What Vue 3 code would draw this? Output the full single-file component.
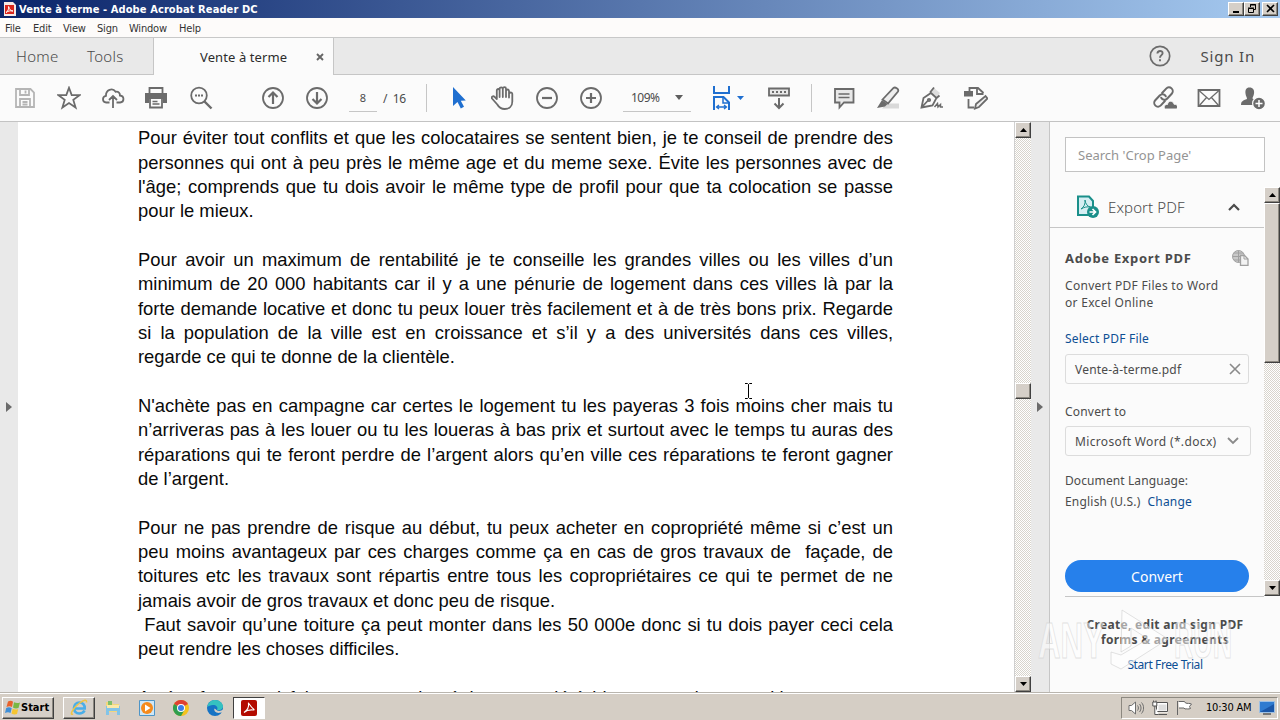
<script setup>
import { ref } from 'vue'

const menus = ['File', 'Edit', 'View', 'Sign', 'Window', 'Help']
const page = ref(8)
const zoom = ref('109%')
const search = ref('')

// last: true means the line ends a paragraph and is not justified
const lines = [
  { text: 'Pour éviter tout conflits et que les colocataires se sentent bien, je te conseil de prendre des' },
  { text: 'personnes qui ont à peu près le même age et du meme sexe. Évite les personnes avec de' },
  { text: "l'âge; comprends que tu dois avoir le même type de profil pour que ta colocation se passe" },
  { text: 'pour le mieux.', last: true },
  { text: '', last: true },
  { text: 'Pour avoir un maximum de rentabilité je te conseille les grandes villes ou les villes d’un' },
  { text: 'minimum de 20 000 habitants car il y a une pénurie de logement dans ces villes là par la' },
  { text: 'forte demande locative et donc tu peux louer très facilement et à de très bons prix. Regarde' },
  { text: 'si la population de la ville est en croissance et s’il y a des universités dans ces villes,' },
  { text: 'regarde ce qui te donne de la clientèle.', last: true },
  { text: '', last: true },
  { text: "N'achète pas en campagne car certes le logement tu les payeras 3 fois moins cher mais tu" },
  { text: 'n’arriveras pas à les louer ou tu les loueras à bas prix et surtout avec le temps tu auras des' },
  { text: 'réparations qui te feront perdre de l’argent alors qu’en ville ces réparations te feront gagner' },
  { text: 'de l’argent.', last: true },
  { text: '', last: true },
  { text: 'Pour ne pas prendre de risque au début, tu peux acheter en copropriété même si c’est un' },
  { text: 'peu moins avantageux par ces charges comme ça en cas de gros travaux de \u00a0façade, de' },
  { text: 'toitures etc les travaux sont répartis entre tous les copropriétaires ce qui te permet de ne' },
  { text: 'jamais avoir de gros travaux et donc peu de risque.', last: true },
  { text: '\u00a0Faut savoir qu’une toiture ça peut monter dans les 50 000e donc si tu dois payer ceci cela' },
  { text: 'peut rendre les choses difficiles.', last: true },
  { text: '', last: true },
  { text: 'Après, faut aussi faire une attention à la copropriété bien avant de te positionner sur un' },
]
</script>

<template>
  <div class="screen">
    <header class="titlebar">
      <svg class="app-icon" width="12" height="14" viewBox="0 0 12 14">
        <path d="M0 0h9l3 3v11H0z" fill="#f6e9e6" />
        <path d="M1 3h9v9H1z" fill="#d9261c" />
        <path d="M2 10.500c2-1 3-4 2.600-6 .7 3 2.400 4.500 4.400 4.500-3-.6-5 .1-7 1.500" fill="none" stroke="#fff" stroke-width="1" />
      </svg>
      <span class="title">Vente à terme - Adobe Acrobat Reader DC</span>
      <div class="window-buttons">
        <button class="raised" aria-label="Minimize">
          <svg width="11" height="10" viewBox="0 0 11 10"><path d="M2 7h6v2H2z" /></svg>
        </button>
        <button class="raised" aria-label="Restore">
          <svg width="11" height="10" viewBox="0 0 11 10" fill="none" stroke="#000">
            <path d="M3.500 3V.5h5v5H7M3 1h6M1.500 4.500h5v4h-5zM1 4h6" />
          </svg>
        </button>
        <button class="raised close" aria-label="Close">
          <svg width="11" height="10" viewBox="0 0 11 10"><path d="M2 1l7 7M9 1L2 8" stroke="#000" stroke-width="1.600" /></svg>
        </button>
      </div>
    </header>

    <nav class="menubar">
      <span v-for="m in menus" :key="m" :class="'menu-' + m.toLowerCase()">{{ m }}</span>
    </nav>

    <div class="tabbar">
      <div class="tabs-left">
        <span class="home">Home</span>
        <span class="tools">Tools</span>
      </div>
      <div class="tab-active">
        <span>Vente à terme</span>
        <svg width="8" height="8" viewBox="0 0 8 8"><path d="M1 1l6 6M7 1L1 7" stroke="#666" stroke-width="1.900" /></svg>
      </div>
      <div class="tabs-right">
        <svg width="22" height="22" viewBox="0 0 22 22" fill="none" stroke="#6b6b6b" stroke-width="1.700">
          <circle cx="11" cy="11" r="9.700" />
          <path d="M8.400 8.500c.2-3.300 5.300-3.200 5.200-.3 0 1.900-2.600 2-2.600 4.500M11 14.200v2" stroke-width="1.900" />
        </svg>
        <span>Sign In</span>
      </div>
    </div>

    <div class="toolbar">
      <button aria-label="Save">
        <svg class="icon pale" viewBox="0 0 24 24">
          <path d="M3 3h14.500L21 6.500V21H3zM7 3v6h9V3M12.500 4.500v3M7 21v-8h10v8M9.500 16h5M9.500 18.500h5" />
        </svg>
      </button>
      <button aria-label="Star">
        <svg class="icon" viewBox="0 0 24 24"><path d="M12 1.800l2.700 7.200 7.800.2-6.200 4.700 2.300 7.600-6.600-4.400-6.600 4.400 2.300-7.600L1.500 9.200l7.800-.2z" /></svg>
      </button>
      <button aria-label="Upload">
        <svg class="icon" viewBox="0 0 24 24">
          <path d="M8.500 16.500H5.200C1 16.200.9 10.500 5 9.800 4.600 4 11.500 1 14.600 5.800c3-.6 4.500 1.500 4.300 3.700 4.700.4 4.700 6.800.2 7h-3.600M12 22V10.500M8 14l4-4 4 4" />
        </svg>
      </button>
      <button aria-label="Print">
        <svg class="icon" viewBox="1 0 24 24">
          <path d="M5.500 7V2h13v5" />
          <path d="M1 7h22v10h-4v-4H5v4H1z" fill="#6b6b6b" stroke="none" />
          <path d="M6 12h12v9.500H6z" fill="#fbfbfb" /><path d="M8.500 15.500h5M8.500 18h7" stroke-width="1.300" />
        </svg>
      </button>
      <button aria-label="Find">
        <svg class="icon" viewBox="0 0 24 24">
          <circle cx="10" cy="9.500" r="7.800" /><path d="M15.500 15.500l7 7" stroke-width="2.400" />
          <path d="M6 8.500h2v2H6zM9 8.500h2v2H9zM12 8.500h2v2h-2z" fill="#6b6b6b" stroke="none" />
        </svg>
      </button>
      <button class="prev" aria-label="Previous page">
        <svg class="icon" viewBox="0 0 24 24"><circle cx="12" cy="12" r="10" /><path d="M12 18V7M7.500 11L12 6.500l4.500 4.500" stroke-width="2.200" /></svg>
      </button>
      <button aria-label="Next page">
        <svg class="icon" viewBox="0 0 24 24"><circle cx="12" cy="12" r="10" /><path d="M12 6v11M7.500 13l4.500 4.500 4.500-4.500" stroke-width="2.200" /></svg>
      </button>
      <div class="field page-field">{{ page }}</div>
      <span class="page-total">/&nbsp; 16</span>
      <i class="sep sep-page"></i>
      <button class="select" aria-label="Select">
        <svg class="icon" viewBox="0 0 24 24"><path d="M6 1v19l4.500-4 3.300 6.500 3.200-1.700-3.200-6 5-.3z" fill="#1f6fd0" stroke="none" /></svg>
      </button>
      <button aria-label="Hand">
        <svg class="icon" viewBox="0 0 24 24" stroke-linecap="round" stroke-linejoin="round">
          <path d="M5.800 13V4.500c0-2 2.800-2 2.800 0V11M8.600 5V2.900c0-2 3.200-2 3.200 0V11M11.800 4V2.700c0-2 3.200-2 3.200 0V11M15 5c0-2 3-2 3 0v6.500M18 8c0-2 3.400-2 3.300 0v7.500c0 5-3.300 7.500-7.600 7.500-3.500 0-5.700-1.500-7.400-4.500L1 12.500c-.9-1.700 1.200-3 2.600-1.700L5.800 13" />
        </svg>
      </button>
      <button aria-label="Zoom out">
        <svg class="icon" viewBox="0 0 24 24"><circle cx="12" cy="12" r="10" /><path d="M7 12h10" stroke-width="2.200" /></svg>
      </button>
      <button aria-label="Zoom in">
        <svg class="icon" viewBox="0 0 24 24"><circle cx="12" cy="12" r="10" /><path d="M7 12h10M12 7v10" stroke-width="2.200" /></svg>
      </button>
      <div class="field zoom-field">
        <span>{{ zoom }}</span>
        <svg width="8" height="5" viewBox="0 0 8 5"><path d="M0 0h8L4 5z" fill="#5e5e5e" /></svg>
      </div>
      <button class="fit" aria-label="Fit width">
        <svg width="32" height="26" viewBox="0 0 32 26" fill="none" stroke="#1f6fd0" stroke-width="2">
          <path d="M2 1v7h15V1M2 25V12h9.500l5.500 5.500V25" />
          <path d="M11 12v6h6" stroke-width="1.500" />
          <path d="M5 22h9M7 20l-2.500 2L7 24M12 20l2.500 2-2.500 2" stroke-width="1.300" />
          <path d="M25 11h7l-3.500 4z" fill="#1f6fd0" stroke="none" />
        </svg>
      </button>
      <button class="keys" aria-label="Keyboard">
        <svg class="icon" viewBox="0 0 24 24">
          <path d="M2 2.500h20v7H2z" fill="#e8e8e8" /><path d="M5 6h2M9 6h2M13 6h2M17 6h2M12 12v10M7.500 17.500L12 22l4.500-4.500" stroke-width="2" />
        </svg>
      </button>
      <i class="sep"></i>
      <button class="comment" aria-label="Comment">
        <svg class="icon" viewBox="0 0 24 24"><path d="M3 3h18.500v13.500H12l-4.500 5v-5H3z" fill="#e8e8e8" /><path d="M6.500 8h11M6.500 11.500h11" stroke-width="1.400" /></svg>
      </button>
      <button aria-label="Highlight">
        <svg class="icon" viewBox="0 0 24 24">
          <path d="M10 17.500h13v5H6z" fill="#d9d9d9" stroke="none" />
          <path d="M6.500 13.500L17.500 2c1.500-1.300 5.800.8 4.500 3.500L12 17.500z" fill="#ededed" />
          <path d="M6 14l5.500 4-2.500 2.500L1 22z" fill="#6b6b6b" stroke="none" />
        </svg>
      </button>
      <button aria-label="Sign">
        <svg class="icon" viewBox="0 0 24 24">
          <path d="M14 2l6 5-3 4-6-5z" fill="#dedede" stroke="none" />
          <path d="M1.500 21.500L3.500 12 11 7l5.500 5L12.500 19.500zM1.500 21.500L8 14.500M10 6.500L14 1.500M16 12.500l3.500-3" />
          <circle cx="9" cy="14" r="1.200" /><path d="M14.500 21l3-3.500.5 3.500 2.500-2.500v2.500H23" stroke-width="1.500" />
        </svg>
      </button>
      <button aria-label="Edit page">
        <svg class="icon" viewBox="0 0 24 24">
          <path d="M5.500 6V2h8.500l5.500 5M13 2v6h6.500M4.500 13v8.500h5.500" />
          <path d="M0 5h9v5.500H0z" fill="#6b6b6b" stroke="none" />
          <path d="M11 22.500l1-4.500L21.500 10l2 2.500-8.500 8.500z" fill="#eee" />
        </svg>
      </button>
      <div class="share">
        <button aria-label="Copy link">
          <svg class="icon" viewBox="0 0 24 24" stroke-linecap="round">
            <g transform="rotate(-47 10.500 11)" stroke-width="2">
              <path d="M8.500 14.800H2.500a3.800 3.800 0 0 1 0-7.600h6.500a3.800 3.800 0 0 1 3.600 5M12.500 7.200H18.500a3.800 3.800 0 0 1 0 7.600h-6.500a3.800 3.800 0 0 1-3.600-5" />
            </g>
            <path d="M11.500 22.800c-1-3 .8-4.600 3-4.300.5-4.500 6-4 6.500-.2 3-.3 4.500 2 3 4.500z" fill="#6b6b6b" stroke="#fbfbfb" stroke-width=".8" />
          </svg>
        </button>
        <button aria-label="Mail">
          <svg class="icon" viewBox="0 0 24 24"><path d="M1.500 4h21v16h-21z" /><path d="M2 4.500l10 9 10-9M2 20l7.500-8.500M22 20l-7.500-8.500" stroke-width="1.300" /></svg>
        </button>
        <button aria-label="Add person">
          <svg class="icon" viewBox="0 0 24 24">
            <path d="M8.500 1.500c3.500 0 5 2.500 4.500 6-.3 2.500-1.500 3.500-1.500 5l3 2v4.500H0c0-4 2-4.300 6-6 0-2-1.300-3-1.500-5.500C4.200 4 5 1.500 8.500 1.500" fill="#6b6b6b" stroke="none" />
            <circle cx="18" cy="17.500" r="6.400" fill="#6b6b6b" stroke="#fbfbfb" stroke-width="1.200" />
            <path d="M14.500 17.500h7M18 14v7" stroke="#fff" stroke-width="1.500" />
          </svg>
        </button>
      </div>
    </div>

    <main class="content">
      <aside class="rail">
        <svg width="6" height="10" viewBox="0 0 6 10"><path d="M0 0l6 5-6 5z" fill="#6b6b6b" /></svg>
      </aside>
      <section class="document">
        <div v-for="(line, i) in lines" :key="i" class="line" :class="{ last: line.last }">{{ line.text }}</div>
        <svg class="ibeam" width="9" height="16" viewBox="0 0 9 16">
          <path d="M1 .5h2.500l1 1 1-1H8M4.500 1.500v13M1 15.500h2.500l1-1 1 1H8" fill="none" stroke="#000" />
        </svg>
      </section>
      <div class="scrollbar doc-scroll">
        <button class="raised" aria-label="Scroll up"><svg width="7" height="4" viewBox="0 0 7 4"><path d="M3.500 0L7 4H0z" /></svg></button>
        <div class="raised thumb"></div>
        <button class="raised down" aria-label="Scroll down"><svg width="7" height="4" viewBox="0 0 7 4"><path d="M0 0h7L3.500 4z" /></svg></button>
      </div>
      <div class="divider">
        <svg width="6" height="10" viewBox="0 0 6 10"><path d="M0 0l6 5-6 5z" fill="#6b6b6b" /></svg>
      </div>

      <aside class="panel">
        <input v-model="search" class="search" placeholder="Search 'Crop Page'" />
        <div class="panel-body">
          <div class="export">
            <div class="export-head">
              <svg width="24" height="24" viewBox="0 0 24 24" fill="none" stroke="#1a8f8a" stroke-width="2">
                <path d="M2 1.500h11l4 4.500v14H2z" fill="#d5eef3" />
                <path d="M5 14c3-2 4.500-5 4-9 .5 4 2.500 6.500 5.500 7-3.500-.5-6 0-9.500 2" stroke-width="1" />
                <circle cx="17" cy="17" r="6" fill="#1a8f8a" stroke="none" />
                <path d="M13.500 17h5M16.500 14l3 3-3 3" stroke="#fff" stroke-width="1.700" />
              </svg>
              <span>Export PDF</span>
              <svg class="chevron" width="12" height="8" viewBox="0 0 12 8"><path d="M1 7l5-5 5 5" fill="none" stroke="#4b4b4b" stroke-width="2.200" /></svg>
            </div>
            <div class="export-body">
              <div class="heading">
                <b>Adobe Export PDF</b>
                <svg width="17" height="16" viewBox="0 0 17 16" fill="none" stroke="#a0a0a0">
                  <circle cx="6.500" cy="6.500" r="6" fill="#c9c9c9" /><path d="M.5 6.500h12M6.500.5v12M2 3h9M2 10h9" />
                  <path d="M8.500 5.500h4l3.500 3.500v6.500H8.500z" fill="#f3f3f3" stroke-width="1.300" /><path d="M12 5.500V9h4" />
                </svg>
              </div>
              <p class="blurb">Convert PDF Files to Word<br />or Excel Online</p>
              <a class="select-file">Select PDF File</a>
              <div class="box file-box">
                <span>Vente-à-terme.pdf</span>
                <svg width="12" height="12" viewBox="0 0 12 12"><path d="M1 1l10 10M11 1L1 11" stroke="#8a8a8a" stroke-width="1.600" /></svg>
              </div>
              <div class="convert-label">Convert to</div>
              <div class="box format-box">
                <span>Microsoft Word (*.docx)</span>
                <svg width="12" height="8" viewBox="0 0 12 8"><path d="M1 1l5 5 5-5" fill="none" stroke="#8a8a8a" stroke-width="1.800" /></svg>
              </div>
              <div class="lang-label">Document Language:</div>
              <div class="lang"><span>English (U.S.)</span><a>Change</a></div>
              <button class="convert">Convert</button>
            </div>
          </div>
          <div class="scrollbar panel-scroll">
            <button class="raised" aria-label="Scroll up"><svg width="7" height="4" viewBox="0 0 7 4"><path d="M3.500 0L7 4H0z" /></svg></button>
            <div class="raised thumb"></div>
            <button class="raised down" aria-label="Scroll down"><svg width="7" height="4" viewBox="0 0 7 4"><path d="M0 0h7L3.500 4z" /></svg></button>
          </div>
        </div>
        <footer class="promo">
          <b>Create, edit and sign PDF</b>
          <b class="promo-second">forms &amp; agreements</b>
          <a>Start Free Trial</a>
        </footer>
      </aside>
    </main>

    <svg class="watermark" width="204" height="70" viewBox="0 0 204 70">
      <g fill="#fff" fill-opacity=".5" stroke="#cfcfcf" stroke-opacity=".6">
        <text x="2" y="53" textLength="66" lengthAdjust="spacingAndGlyphs">ANY</text>
        <text x="138" y="53" textLength="58" lengthAdjust="spacingAndGlyphs">RUN</text>
        <path d="M86 5l46 29-47 30-10-5V47l10 3 27-16-17-11v18l-10 6z" />
      </g>
    </svg>

    <footer class="taskbar">
      <button class="raised start">
        <svg width="16" height="15" viewBox="0 0 16 15">
          <path d="M3 1.500c2-1 4-.8 5 .2L7 7C5.500 6 3.500 6 1.500 7z" fill="#e8622c" />
          <path d="M9 2.200c2 1 4 1 6 .2L13.500 8c-2 .8-4 .6-5.500-.5z" fill="#79b843" />
          <path d="M1.200 8c2-1 4-.8 5.500.2L5.500 13C4 12 2 12 0 13z" fill="#3f8fd8" />
          <path d="M7.700 8.800c2 1 4 1 5.500.2L12 14c-2 .8-4 .4-5.500-.5z" fill="#f5c531" />
        </svg>
        <span>Start</span>
      </button>
      <div class="raised task ie">
        <svg width="18" height="17" viewBox="0 0 18 17" fill="none">
          <path d="M14.500 11.500c-1 2-3 3-5.300 3C6 14.500 4 12 4 9s2.300-5.500 5.400-5.500C12.600 3.500 15 6 14.700 9.500H5" stroke="#4aaee8" stroke-width="2.700" />
          <path d="M3 15c-4 2 0-6 6-10.500 5-4 8-4.500 7.500-1" stroke="#efc443" stroke-width="1.500" />
        </svg>
      </div>
      <div class="task">
        <svg width="16" height="16" viewBox="0 0 16 16">
          <path d="M1 2h6l1 2h6v8H1z" fill="#f2d67c" /><path d="M3 1h4v4H3z" fill="#7fbf6a" />
          <path d="M1 6h14v9h-3v-4H4v4H1z" fill="#82c4e8" /><path d="M2 5h12v3H2z" fill="#fae9a8" />
        </svg>
      </div>
      <div class="task">
        <svg width="16" height="16" viewBox="0 0 16 16">
          <path d="M.5.5h15v15H.5z" fill="#cfe7f7" stroke="#4e95c7" /><circle cx="8" cy="8" r="6" fill="#f58a1c" />
          <path d="M6 4.500L11.500 8 6 11.500z" fill="#fff" />
        </svg>
      </div>
      <div class="task">
        <svg width="16" height="16" viewBox="0 0 16 16">
          <circle cx="8" cy="8" r="8" fill="#f4c21e" />
          <path d="M8 8L1.070 4A8 8 0 0 1 14.930 4z" fill="#df4032" />
          <path d="M8 8L1.070 4A8 8 0 0 0 8 16l3.500-6z" fill="#2f9e4f" />
          <circle cx="8" cy="8" r="4" fill="#fff" /><circle cx="8" cy="8" r="3" fill="#3c7de8" />
        </svg>
      </div>
      <div class="task">
        <svg width="16" height="16" viewBox="0 0 16 16">
          <circle cx="8" cy="8" r="8" fill="#1673c4" />
          <path d="M.2 7C1 2.500 4.500 0 8 0c5 0 8 3.500 8 6.500 0 3-3.500 4.500-6 3.500 1.500-3-1-5-4-5-2.500 0-4.500 1-5.800 2" fill="#35c1c0" />
          <path d="M7.500 8.500c-1 2.500 1.500 5 5.500 4.300L16 12V9.500c-1.500 1.500-5 2-6.500.5-.6-.5-1-1-2-1.500z" fill="#d5cec5" />
        </svg>
      </div>
      <div class="task active">
        <svg width="16" height="16" viewBox="0 0 16 16">
          <rect width="16" height="16" rx="2" fill="#b30b00" />
          <path d="M3 12.500C6 10.500 8 7 7.500 3.500 7 1.500 9 6.500 13 9.500 14 11 8 8 3 12.500" fill="none" stroke="#fff" stroke-width="1.100" />
        </svg>
      </div>
      <div class="tray">
        <svg width="16" height="14" viewBox="0 0 16 14" fill="none" stroke="#6e6e6e">
          <path d="M1 4.500h2.500L7.500 1v12l-4-3.500H1z" fill="#fff" /><path d="M9.500 4.500c1.200 1.500 1.200 3.500 0 5M11.500 3c2 2.500 2 5.500 0 8M13.500 1.500c2.800 3 2.800 8 0 11" />
        </svg>
        <svg class="net" width="16" height="16" viewBox="0 0 16 16" fill="none" stroke="#555">
          <path d="M5.500 3.500h10v8h-10z" fill="#ddd" stroke="#fff" stroke-width="2" /><path d="M4.500 2.500h11v9h-11zM7 14.500h8" />
          <path d="M.8 2h4v4h-4zM1.500.500V2M4 .5V2M2.800 6v8.500h4" fill="#fff" />
        </svg>
        <svg class="flag" width="17" height="15" viewBox="0 0 17 15">
          <path d="M1.500 1v14M2.500 1.500h6l1 1.500c2 .8 4 0 6 1l-2 2.500 1 2c-2 1-4 0-5.500.5l-1-1h-5" fill="#fff" stroke="#666" />
        </svg>
        <span class="clock">10:30 AM</span>
        <svg width="16" height="14" viewBox="0 0 16 14">
          <path d="M.5.5h15v11H.5z" fill="#2f7bd0" stroke="#9dc0e4" /><path d="M1 11L15 3v8z" fill="#1a56a8" /><path d="M4 12h8v2H4z" fill="#777" />
        </svg>
      </div>
    </footer>
  </div>
</template>

<style>
body {
  margin: 0;
  overflow: hidden;
}
</style>

<style scoped>
.screen {
  position: relative;
  display: flex;
  flex-direction: column;
  width: 1280px;
  height: 720px;
  overflow: hidden;
  background: #fbfbfb;
  color: #4b4b4b;
  font-family: 'Noto Sans', 'Open Sans', sans-serif;
  font-size: 12px;
}
svg {
  display: block;
  flex: none;
}
span,
a,
b {
  white-space: nowrap;
}
button {
  display: flex;
  align-items: center;
  justify-content: center;
  padding: 0;
  border: 0;
  background: none;
  font: inherit;
}
.raised {
  box-sizing: border-box;
  background: #d5cfc8;
  border: 1px solid;
  border-color: #fff #404040 #404040 #fff;
  box-shadow: inset -1px -1px 0 #8c8880;
}

/* title bar and menus */
.titlebar {
  display: flex;
  align-items: center;
  height: 18px;
  padding: 0 2px 0 4px;
  background: linear-gradient(90deg, #0a246a, #a6caf0);
}
.title {
  margin-left: 3px;
  color: #fff;
  font: bold 11px 'DejaVu Sans Condensed', 'DejaVu Sans', sans-serif;
  letter-spacing: 0.1px;
}
.window-buttons {
  display: flex;
  margin-left: auto;
}
.window-buttons button {
  width: 16px;
  height: 14px;
}
.window-buttons .close {
  margin-left: 2px;
}
.menubar {
  display: flex;
  align-items: center;
  box-sizing: border-box;
  height: 20px;
  padding: 1px 0 0 5px;
  border-bottom: 1px solid #c8c8c8;
  background: #fdfbfa;
  color: #333;
  font: 11px 'DejaVu Sans Condensed', 'DejaVu Sans', sans-serif;
  letter-spacing: -0.2px;
}
.menubar span {
  flex: none;
  width: 30px;
}
.menubar span:first-child {
  width: 28px;
}
.menubar .menu-view {
  width: 34px;
}
.menubar .menu-sign {
  width: 32px;
}
.menubar .menu-window {
  width: 50px;
}

/* tabs */
.tabbar {
  display: flex;
  height: 37px;
  font-size: 15px;
}
.tabs-left,
.tabs-right {
  display: flex;
  align-items: center;
  box-sizing: border-box;
  border-bottom: 1px solid #c6c6c6;
  background: #e9e9e9;
}
.tabs-left {
  width: 154px;
  padding-left: 16px;
  border-right: 1px solid #c6c6c6;
}
.home {
  width: 71px;
}
.home,
.tools {
  font-weight: 300;
  letter-spacing: 0.3px;
}
.tab-active {
  display: flex;
  align-items: center;
  width: 179px;
  color: #2c2c2c;
  font-size: 13px;
}
.tab-active span {
  width: 116px;
  margin-left: 46px;
  letter-spacing: 0.1px;
}
.tabs-right {
  flex: 1;
  justify-content: flex-end;
  padding-right: 25px;
  border-left: 1px solid #c6c6c6;
}
.tabs-right span {
  margin-left: 30px;
  letter-spacing: 0.8px;
}

/* toolbar */
.toolbar {
  display: flex;
  align-items: center;
  box-sizing: border-box;
  height: 47px;
  padding-left: 3px;
  border-bottom: 1px solid #c3c3c3;
}
.toolbar button {
  width: 44px;
  height: 44px;
}
.icon {
  width: 24px;
  height: 24px;
  fill: none;
  stroke: #6b6b6b;
  stroke-width: 1.8;
}
.icon.pale {
  stroke: #b5b5b5;
}
.toolbar .prev {
  margin-left: 28px;
}
.field {
  box-sizing: border-box;
  height: 28px;
  border-bottom: 1px solid #c6c6c6;
  line-height: 28px;
}
.page-field {
  width: 28px;
  margin-left: 10px;
  font-size: 11px;
  text-align: center;
}
.page-total {
  width: 43px;
  margin-left: 6px;
  letter-spacing: -0.3px;
}
.sep {
  width: 1px;
  height: 28px;
  background: #c6c6c6;
}
.toolbar .select {
  margin-left: 10px;
}
.zoom-field {
  display: flex;
  align-items: center;
  width: 68px;
  margin-left: 10px;
  padding-left: 8px;
}
.zoom-field span {
  width: 44px;
  letter-spacing: -0.5px;
}
.toolbar .fit {
  margin-left: 15px;
}
.toolbar .keys {
  margin-left: 7px;
  margin-right: 10px;
}
.toolbar .comment {
  margin-left: 10px;
}
.share {
  display: flex;
  margin-left: auto;
  margin-right: 5px;
}

/* document */
.content {
  display: flex;
  height: 570px;
}
.rail {
  display: flex;
  align-items: center;
  width: 12px;
  padding-left: 6px;
  background: #e9e9e9;
}
.document {
  position: relative;
  box-sizing: border-box;
  width: 996px;
  padding: 4.400px 121px 0 120px;
  overflow: hidden;
  background: #fff;
  color: #0a0a0a;
  font: 18.400px 'Liberation Sans', Arial, sans-serif;
}
.line {
  height: 24.340px;
  line-height: 24.340px;
  text-align: justify;
  text-align-last: justify;
}
.line.last {
  text-align-last: left;
}
.ibeam {
  position: absolute;
  left: 726px;
  top: 261px;
}
.scrollbar {
  display: flex;
  flex-direction: column;
  background: repeating-conic-gradient(#d8d4cc 0 25%, #fff 0 50%) 0 0 / 2px 2px;
}
.scrollbar button {
  width: 16px;
  height: 16px;
}
.scrollbar .down {
  margin-top: auto;
}
.doc-scroll {
  width: 16px;
  border-left: 1px solid #d0d0d0;
}
.doc-scroll .thumb {
  height: 16px;
  margin-top: 245px;
}
.divider {
  display: flex;
  align-items: center;
  box-sizing: border-box;
  width: 19px;
  padding-left: 6px;
  border-right: 1px solid #c6c6c6;
  background: #e9e9e9;
}

/* tools panel */
.panel {
  display: flex;
  flex-direction: column;
  flex: 1;
  min-width: 0;
}
.search {
  box-sizing: border-box;
  width: 200px;
  height: 35px;
  margin: 15px 15px 15px;
  padding: 0 12px;
  border: 1px solid #c3c3c3;
  background: #fff;
  font: 13px 'Noto Sans', 'Open Sans', sans-serif;
}
.search::placeholder {
  color: #949494;
  opacity: 1;
}
.panel-body {
  display: flex;
  height: 409px;
}
.export {
  flex: 1;
}
.export-head {
  display: flex;
  align-items: center;
  box-sizing: border-box;
  height: 41px;
  padding-left: 26px;
  border-bottom: 1px solid #c6c6c6;
  font-size: 15px;
  font-weight: 300;
}
.export-head span {
  width: 120px;
  margin-left: 8px;
  letter-spacing: 0.1px;
}
.export-body {
  display: flex;
  flex-direction: column;
  align-items: flex-start;
  height: 368px;
  margin-left: 15px;
  border-bottom: 1px solid #c6c6c6;
  letter-spacing: 0.2px;
}
.heading {
  display: flex;
  align-items: center;
  justify-content: space-between;
  width: 184px;
  height: 20px;
  margin-top: 20px;
  font-size: 13px;
  letter-spacing: 0.7px;
}
.blurb {
  margin: 9px 0 0;
  line-height: 17px;
  letter-spacing: 0.3px;
  white-space: nowrap;
}
a {
  color: #0d4f94;
}
.select-file {
  margin-top: 19px;
  line-height: 17px;
}
.box {
  display: flex;
  align-items: center;
  justify-content: space-between;
  box-sizing: border-box;
  height: 30px;
  padding: 0 7px 0 9px;
  border: 1px solid #dcdcdc;
  border-radius: 3px;
}
.file-box {
  width: 184px;
  margin-top: 7px;
}
.convert-label {
  margin-top: 19px;
  line-height: 17px;
}
.format-box {
  width: 186px;
  margin-top: 6px;
  padding-right: 11px;
  letter-spacing: 0.35px;
}
.lang-label {
  margin-top: 16px;
  line-height: 17px;
  letter-spacing: 0.1px;
}
.lang {
  margin-top: 4px;
  line-height: 17px;
}
.lang a {
  margin-left: 7px;
}
.convert {
  width: 184px;
  height: 32px;
  margin-top: 50px;
  border-radius: 16px;
  background: #2680eb;
  color: #fff;
  font-size: 14px;
}
.panel-scroll {
  width: 16px;
}
.panel-scroll .thumb {
  height: 160px;
}
.promo {
  display: flex;
  flex-direction: column;
  align-items: center;
  padding-top: 21px;
  line-height: 15px;
  letter-spacing: 0.3px;
}
.promo a {
  margin-top: 10px;
  letter-spacing: -0.4px;
}
.watermark {
  position: absolute;
  left: 1036px;
  top: 605px;
  font: bold 50px 'Liberation Sans', Arial, sans-serif;
}

/* taskbar */
.taskbar {
  display: flex;
  align-items: center;
  box-sizing: border-box;
  height: 28px;
  padding: 2px 2px 0;
  border-top: 1px solid #b9b5ae;
  box-shadow: inset 0 1px 0 #fff;
  background: #d5cec5;
}
.start {
  justify-content: flex-start;
  width: 52px;
  height: 22px;
  margin-right: 9px;
  padding-left: 2px;
  color: #000;
  font: bold 11px 'DejaVu Sans Condensed', 'DejaVu Sans', sans-serif;
}
.task {
  display: flex;
  align-items: center;
  justify-content: center;
  box-sizing: border-box;
  width: 32px;
  height: 22px;
  margin-right: 2px;
}
.task.active {
  border: 1px solid;
  border-color: #404040 #fff #fff #404040;
  background: #fff;
}
.tray {
  display: flex;
  align-items: center;
  box-sizing: border-box;
  width: 157px;
  height: 22px;
  margin-left: auto;
  padding-left: 6px;
  border: 1px solid;
  border-color: #8c8880 #fff #fff #8c8880;
}
.net {
  margin-left: 8px;
}
.flag {
  margin-left: 8px;
}
.clock {
  width: 53px;
  margin-left: 13px;
  color: #000;
  font: 11px 'DejaVu Sans Condensed', 'DejaVu Sans', sans-serif;
  letter-spacing: -0.2px;
}
</style>
